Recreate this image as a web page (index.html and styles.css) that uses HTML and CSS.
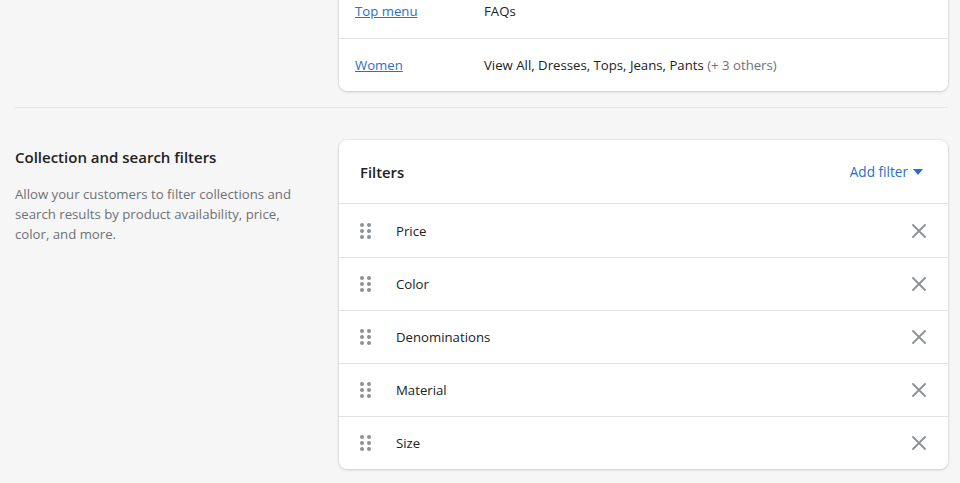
FILE: index.html
```html
<!DOCTYPE html>
<html lang="en">
<head>
<meta charset="utf-8">
<title>Navigation and filters</title>
<link rel="stylesheet" href="styles.css">
</head>
<body>
<div class="page">
  <section class="section section-first">
    <div class="annotation"></div>
    <div class="card menu-card">
      <div class="menu-row">
        <a class="menu-link" href="#">Top menu</a>
        <span class="menu-items">FAQs</span>
      </div>
      <div class="menu-row">
        <a class="menu-link" href="#">Women</a>
        <span class="menu-items">View All, Dresses, Tops, Jeans, Pants <span class="muted">(+ 3 others)</span></span>
      </div>
    </div>
  </section>

  <section class="section section-filters">
    <div class="annotation">
      <h2 class="annotation-title">Collection and search filters</h2>
      <p class="annotation-desc">Allow your customers to filter collections and search results by product availability, price, color, and more.</p>
    </div>
    <div class="card filters-card">
      <div class="filters-header">
        <h3 class="filters-title">Filters</h3>
        <button class="add-filter" type="button">Add filter
          <svg class="caret" viewBox="0 0 10 6" width="10" height="6" aria-hidden="true"><path d="M0 0h10L5 6z" fill="#2c6ecb"/></svg>
        </button>
      </div>
      <ul class="filter-list">
        <li class="filter-row"><span class="handle"><i></i><i></i><i></i><i></i><i></i><i></i></span><span class="filter-name">Price</span><button class="remove" type="button" aria-label="Remove Price"><svg viewBox="0 0 14 14" width="14" height="14"><path d="M1 1l12 12M13 1L1 13" stroke="#8c9196" stroke-width="1.8" stroke-linecap="round"/></svg></button></li>
        <li class="filter-row"><span class="handle"><i></i><i></i><i></i><i></i><i></i><i></i></span><span class="filter-name">Color</span><button class="remove" type="button" aria-label="Remove Color"><svg viewBox="0 0 14 14" width="14" height="14"><path d="M1 1l12 12M13 1L1 13" stroke="#8c9196" stroke-width="1.8" stroke-linecap="round"/></svg></button></li>
        <li class="filter-row"><span class="handle"><i></i><i></i><i></i><i></i><i></i><i></i></span><span class="filter-name">Denominations</span><button class="remove" type="button" aria-label="Remove Denominations"><svg viewBox="0 0 14 14" width="14" height="14"><path d="M1 1l12 12M13 1L1 13" stroke="#8c9196" stroke-width="1.8" stroke-linecap="round"/></svg></button></li>
        <li class="filter-row"><span class="handle"><i></i><i></i><i></i><i></i><i></i><i></i></span><span class="filter-name">Material</span><button class="remove" type="button" aria-label="Remove Material"><svg viewBox="0 0 14 14" width="14" height="14"><path d="M1 1l12 12M13 1L1 13" stroke="#8c9196" stroke-width="1.8" stroke-linecap="round"/></svg></button></li>
        <li class="filter-row"><span class="handle"><i></i><i></i><i></i><i></i><i></i><i></i></span><span class="filter-name">Size</span><button class="remove" type="button" aria-label="Remove Size"><svg viewBox="0 0 14 14" width="14" height="14"><path d="M1 1l12 12M13 1L1 13" stroke="#8c9196" stroke-width="1.8" stroke-linecap="round"/></svg></button></li>
      </ul>
    </div>
  </section>
</div>
</body>
</html>
```

FILE: styles.css
```css
* { box-sizing: border-box; }
html, body {
  margin: 0;
  padding: 0;
  background: #f6f6f7;
  font-family: "Open Sans", "Noto Sans", sans-serif;
  font-size: 13.2px;
  color: #202223;
  height: 483px;
  overflow: hidden;
}
.page {
  padding: 0 12px 0 15px;
}
.section {
  display: grid;
  grid-template-columns: 304px 609px;
  column-gap: 20px;
}
.section-first {
  margin-top: -15px;
  padding-bottom: 16px;
  border-bottom: 1px solid #e1e3e5;
}
.section-filters {
  padding-top: 32px;
}
.card {
  background: #fff;
  border-radius: 8px;
  box-shadow: 0 0 0 1px rgba(63,63,68,0.05), 0 1px 3px 0 rgba(63,63,68,0.18);
  overflow: hidden;
}
.menu-row {
  display: flex;
  align-items: center;
  height: 53px;
  padding-left: 16px;
  padding-bottom: 1px;
}
.menu-row + .menu-row { border-top: 1px solid #e1e3e5; }
.menu-link {
  width: 129px;
  color: #2c6ecb;
  text-decoration: underline;
}
.menu-items { color: #202223; }
.muted { color: #6d7175; }

.annotation-title {
  margin: 5px 0 0;
  font-size: 15px;
  font-weight: 600;
  line-height: 24px;
}
.annotation-desc {
  margin: 15px 0 0;
  color: #6d7175;
  line-height: 20px;
  max-width: 285px;
}

.filters-header {
  display: flex;
  align-items: center;
  justify-content: space-between;
  height: 64px;
  padding: 0 25px 0 21px;
  border-bottom: 1px solid #e1e3e5;
}
.filters-title {
  margin: 0;
  font-size: 14.8px;
  font-weight: 600;
}
.add-filter {
  display: flex;
  align-items: center;
  gap: 5px;
  border: 0;
  background: none;
  padding: 0;
  font: inherit;
  font-size: 13.6px;
  color: #2c6ecb;
  cursor: pointer;
}
.filter-list {
  list-style: none;
  margin: 0;
  padding: 0;
}
.filter-row {
  display: flex;
  align-items: center;
  height: 53px;
  padding: 0 22px 0 21px;
}
.filter-row + .filter-row { border-top: 1px solid #e1e3e5; }
.handle {
  display: grid;
  grid-template-columns: repeat(2, 4px);
  grid-auto-rows: 4px;
  gap: 2px 3px;
  width: 11px;
  margin-right: 25px;
}
.handle i {
  display: block;
  width: 4px;
  height: 4px;
  border-radius: 50%;
  background: #8c9196;
}
.filter-name { flex: 1; }
.remove {
  border: 0;
  background: none;
  padding: 0;
  width: 14px;
  height: 14px;
  display: flex;
  cursor: pointer;
}
```
